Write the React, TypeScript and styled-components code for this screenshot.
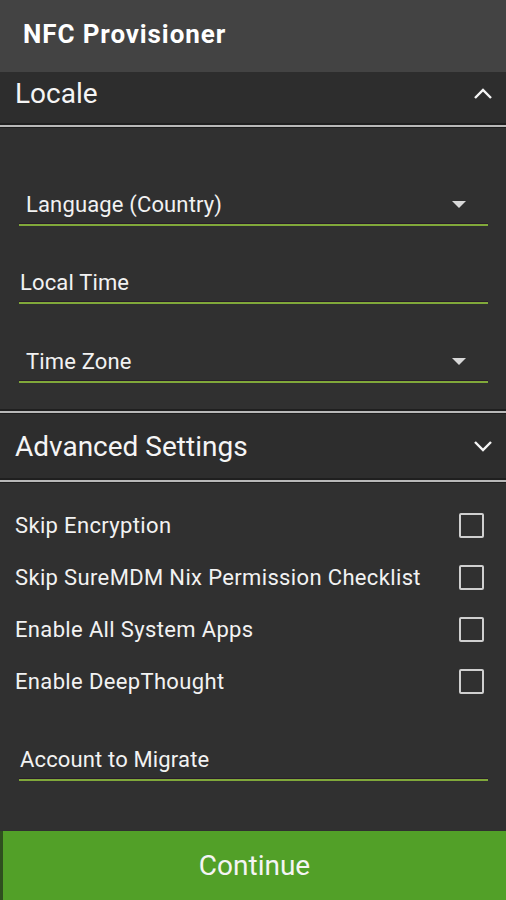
import React from 'react'
import styled, { createGlobalStyle } from 'styled-components'

const GlobalStyle = createGlobalStyle`
  html, body {
    margin: 0;
    padding: 0;
    background: #303030;
  }
  body {
    font-family: Roboto, 'Noto Sans', sans-serif;
    color: #f2f2f2;
  }
`

const Screen = styled.div`
  width: 506px;
  height: 900px;
  display: flex;
  flex-direction: column;
  background: #303030;
  overflow: hidden;
`

const AppBar = styled.div`
  height: 72px;
  flex-shrink: 0;
  background: #434343;
  display: flex;
  align-items: center;
  padding: 0 0 4px 23px;
  box-sizing: border-box;
`

const Title = styled.h1`
  margin: 0;
  font-size: 26px;
  font-weight: 700;
  letter-spacing: 0.9px;
  color: #ffffff;
`

const SectionHeader = styled.div<{ $height: number; $pb: number }>`
  height: ${(p) => p.$height}px;
  flex-shrink: 0;
  display: flex;
  align-items: center;
  justify-content: space-between;
  padding: 0 12px ${(p) => p.$pb}px 15px;
  background: #2d2d2d;
  box-sizing: border-box;
`

const HeaderTitle = styled.span`
  font-size: 28px;
  color: #f5f5f5;
`

const Divider = styled.div`
  height: 5px;
  flex-shrink: 0;
  background: #1f1f1f;
  display: flex;
  align-items: center;

  &::after {
    content: '';
    display: block;
    width: 100%;
    height: 2px;
    background: #b8b8b8;
  }
`

const Body = styled.div<{ $pt: number; $pb: number }>`
  display: flex;
  flex-direction: column;
  padding: ${(p) => p.$pt}px 0 ${(p) => p.$pb}px;
`

const Field = styled.div<{ $mt: number }>`
  margin: ${(p) => p.$mt}px 18px 0 19px;
  height: 42px;
  display: flex;
  align-items: center;
  justify-content: space-between;
  border-bottom: 2px solid #80a83a;
  box-shadow: 0 -1px 0 #2a1d2a inset;
  padding: 0 22px 0 0;
  box-sizing: border-box;
`

const FieldLabel = styled.span<{ $indent: number }>`
  font-size: 22px;
  letter-spacing: 0.15px;
  color: #f2f2f2;
  padding-left: ${(p) => p.$indent}px;
`

const Caret = styled.span`
  width: 0;
  height: 0;
  border-left: 7px solid transparent;
  border-right: 7px solid transparent;
  border-top: 7px solid #d8d8d8;
`

const CheckRow = styled.div`
  height: 52px;
  display: flex;
  align-items: center;
  justify-content: space-between;
  padding: 0 22px 0 15px;
`

const CheckLabel = styled.span`
  font-size: 22px;
  letter-spacing: 0.35px;
  color: #f2f2f2;
`

const Box = styled.span`
  width: 21px;
  height: 21px;
  border: 2px solid #cfcfcf;
  border-radius: 2px;
`

const Spacer = styled.div`
  flex: 1;
`

const ContinueButton = styled.button`
  height: 69px;
  flex-shrink: 0;
  border: none;
  border-left: 3px solid #2f4f1f;
  background: #52a028;
  color: #f4f4f4;
  font-family: Roboto, 'Noto Sans', sans-serif;
  font-size: 28px;
  cursor: pointer;
`

const Chevron = ({ up }: { up?: boolean }) => (
  <svg width="22" height="14" viewBox="0 0 22 14">
    <path
      d={up ? 'M3 11 L11 3 L19 11' : 'M3 3 L11 11 L19 3'}
      stroke="#f5f5f5"
      strokeWidth="2.4"
      fill="none"
    />
  </svg>
)

const checks = [
  'Skip Encryption',
  'Skip SureMDM Nix Permission Checklist',
  'Enable All System Apps',
  'Enable DeepThought',
]

const App = () => (
  <>
    <GlobalStyle />
    <Screen>
      <AppBar>
        <Title>NFC Provisioner</Title>
      </AppBar>
      <SectionHeader $height={51} $pb={8}>
        <HeaderTitle>Locale</HeaderTitle>
        <Chevron up />
      </SectionHeader>
      <Divider />
      <Body $pt={56} $pb={26}>
        <Field $mt={0}>
          <FieldLabel $indent={7}>Language (Country)</FieldLabel>
          <Caret />
        </Field>
        <Field $mt={36}>
          <FieldLabel $indent={1}>Local Time</FieldLabel>
        </Field>
        <Field $mt={37}>
          <FieldLabel $indent={7}>Time Zone</FieldLabel>
          <Caret />
        </Field>
      </Body>
      <Divider />
      <SectionHeader $height={64} $pb={0}>
        <HeaderTitle>Advanced Settings</HeaderTitle>
        <Chevron />
      </SectionHeader>
      <Divider />
      <Body $pt={16} $pb={0}>
        {checks.map((c) => (
          <CheckRow key={c}>
            <CheckLabel>{c}</CheckLabel>
            <Box />
          </CheckRow>
        ))}
        <Field $mt={32}>
          <FieldLabel $indent={1}>Account to Migrate</FieldLabel>
        </Field>
      </Body>
      <Spacer />
      <ContinueButton>Continue</ContinueButton>
    </Screen>
  </>
)

export default App
